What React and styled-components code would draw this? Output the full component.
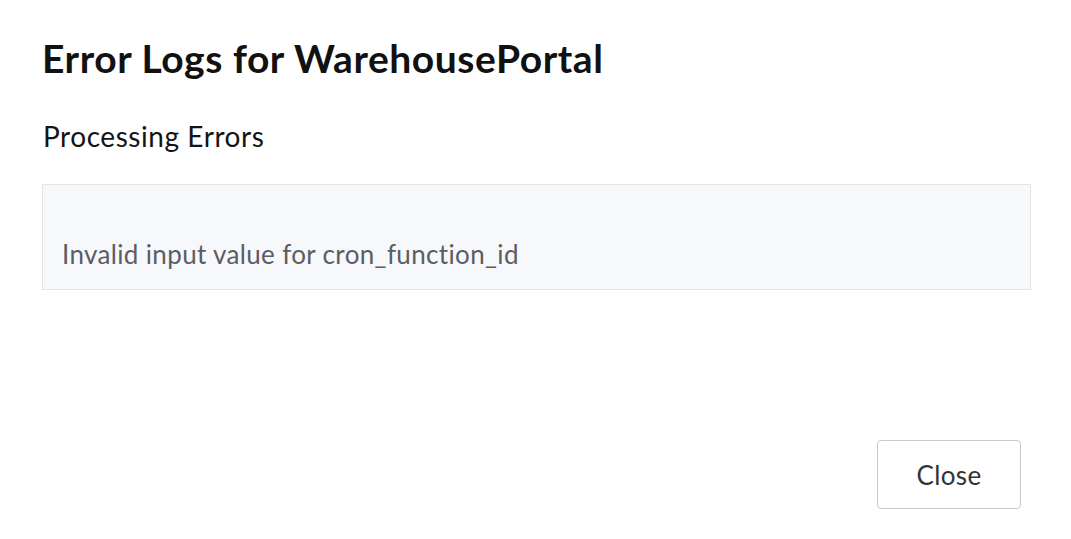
import React from 'react';
import styled, { createGlobalStyle } from 'styled-components';

const GlobalStyle = createGlobalStyle`
  html, body {
    margin: 0;
    padding: 0;
    background: #ffffff;
    font-family: Lato, "Noto Sans", sans-serif;
  }
`;

const Modal = styled.div`
  width: 1071px;
  height: 539px;
  box-sizing: border-box;
  padding: 34px 40px 30px 42px;
  display: flex;
  flex-direction: column;
`;

const Title = styled.h2`
  margin: 0;
  font-size: 39px;
  font-weight: 700;
  line-height: 48px;
  letter-spacing: 0.55px;
  color: #111111;
`;

const Subtitle = styled.h3`
  margin: 37px 0 0 1px;
  font-size: 28px;
  font-weight: 400;
  line-height: 34px;
  letter-spacing: 0.55px;
  color: #141414;
`;

const LogBox = styled.div`
  margin-top: 31px;
  height: 106px;
  box-sizing: border-box;
  background: #f6f8fb;
  border: 1px solid #e3e4e6;
  padding: 53px 19px 0 19px;
`;

const LogLine = styled.p`
  margin: 0;
  font-size: 26px;
  line-height: 32px;
  letter-spacing: 0.35px;
  color: #5c5d62;
`;

const Footer = styled.div`
  margin-top: auto;
  display: flex;
  justify-content: flex-end;
  padding-right: 10px;
`;

const Button = styled.button`
  width: 144px;
  height: 69px;
  background: #ffffff;
  border: 1px solid #c9c9c9;
  border-radius: 4px;
  font-family: Lato, "Noto Sans", sans-serif;
  font-size: 26px;
  letter-spacing: 0.4px;
  color: #333333;
  cursor: pointer;
`;

const App = () => {
  return (
    <>
      <GlobalStyle />
      <Modal>
        <Title>Error Logs for WarehousePortal</Title>
        <Subtitle>Processing Errors</Subtitle>
        <LogBox>
          <LogLine>Invalid input value for cron_function_id</LogLine>
        </LogBox>
        <Footer>
          <Button>Close</Button>
        </Footer>
      </Modal>
    </>
  );
};

export default App;
